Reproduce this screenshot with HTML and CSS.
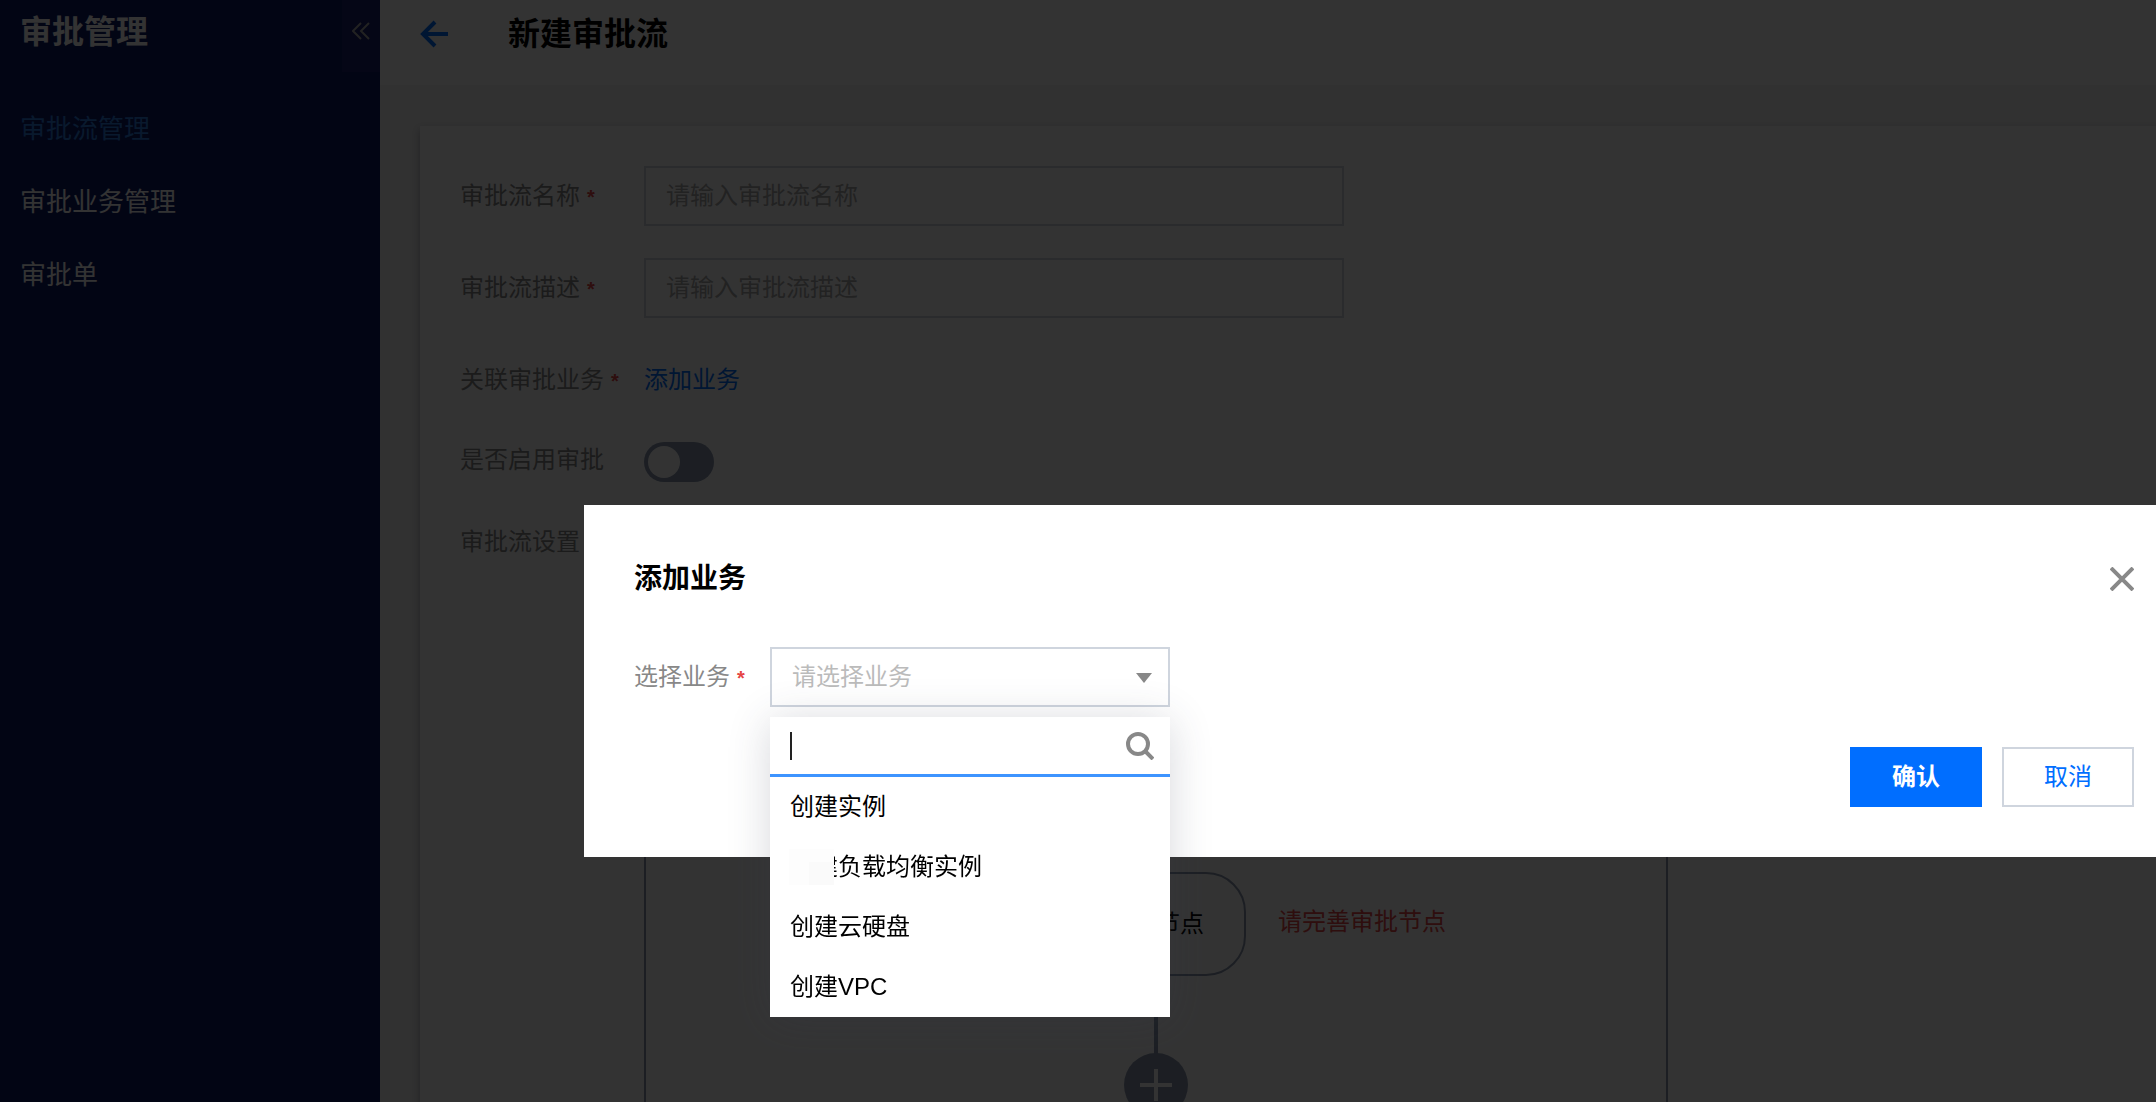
FILE: index.html
```html
<!DOCTYPE html>
<html lang="zh-CN">
<head>
    <meta charset="UTF-8">
    <meta name="viewport" content="width=device-width, initial-scale=1.0">
    <title>新建审批流</title>
    <link rel="stylesheet" href="styles.css">
</head>
<body>
    <div class="layout">
        <aside class="sidebar">
            <div class="sidebar-head">
                <h2>审批管理</h2>
                <button class="collapse" type="button" aria-label="收起">
                    <svg width="18" height="18" viewBox="0 0 18 18" fill="none" stroke="currentColor" stroke-width="2"><path d="M9 1L1 9l8 8M17 1L9 9l8 8"/></svg>
                </button>
            </div>
            <nav>
                <a class="active" href="#">审批流管理</a>
                <a href="#">审批业务管理</a>
                <a href="#">审批单</a>
            </nav>
        </aside>

        <main class="main">
            <header class="page-header">
                <a class="back" href="#" aria-label="返回">
                    <svg width="28" height="28" viewBox="0 0 28 28" fill="none" stroke="currentColor" stroke-width="4"><path d="M15 2L3 14l12 12M3 14h25"/></svg>
                </a>
                <h1>新建审批流</h1>
            </header>

            <form class="card">
                <div class="row">
                    <label for="flow-name">审批流名称<i>*</i></label>
                    <input class="text" id="flow-name" type="text" placeholder="请输入审批流名称">
                </div>
                <div class="row">
                    <label for="flow-desc">审批流描述<i>*</i></label>
                    <input class="text" id="flow-desc" type="text" placeholder="请输入审批流描述">
                </div>
                <div class="row">
                    <span class="label">关联审批业务<i>*</i></span>
                    <a class="link" href="#">添加业务</a>
                </div>
                <div class="row row-switch">
                    <label for="enabled">是否启用审批</label>
                    <input class="switch" id="enabled" type="checkbox">
                </div>
                <div class="row row-flow">
                    <span class="label">审批流设置<i>*</i></span>
                    <div class="flow">
                        <div class="node-line">
                            <button class="node" type="button">审批节点</button>
                            <span class="error">请完善审批节点</span>
                        </div>
                        <button class="add" type="button" aria-label="添加节点">
                            <svg width="32" height="32" viewBox="0 0 32 32" stroke="currentColor" stroke-width="4"><path d="M16 0v32M0 16h32"/></svg>
                        </button>
                    </div>
                </div>
            </form>
        </main>
    </div>

    <div class="mask">
        <section class="modal" role="dialog" aria-labelledby="modal-title">
            <div class="modal-head">
                <h3 id="modal-title">添加业务</h3>
                <button class="close" type="button" aria-label="关闭">
                    <svg width="24" height="24" viewBox="0 0 24 24" stroke="currentColor" stroke-width="4"><path d="M1 1l22 22M23 1L1 23"/></svg>
                </button>
            </div>
            <div class="modal-body">
                <label for="business">选择业务<i>*</i></label>
                <div class="picker">
                    <select id="business">
                        <option>请选择业务</option>
                    </select>
                    <svg class="caret" width="16" height="10" viewBox="0 0 16 10"><path d="M0 0h16l-8 10z" fill="#888"/></svg>
                    <div class="dropdown">
                        <div class="search">
                            <input type="text" aria-label="搜索">
                            <span class="cursor"></span>
                            <svg width="28" height="28" viewBox="0 0 28 28" fill="none" stroke="#888" stroke-width="4"><circle cx="12" cy="12" r="10"/><path d="M19 19l8 8"/></svg>
                        </div>
                        <ul>
                            <li>创建实例</li>
                            <li class="masked">创建负载均衡实例</li>
                            <li>创建云硬盘</li>
                            <li>创建VPC</li>
                        </ul>
                    </div>
                </div>
            </div>
            <div class="modal-foot">
                <button class="btn primary" type="button">确认</button>
                <button class="btn" type="button">取消</button>
            </div>
        </section>
    </div>
</body>
</html>
```
FILE: styles.css
```css
* {
    box-sizing: border-box;
}
body {
    margin: 0;
    height: 100vh;
    overflow: hidden;
    font-family: "Liberation Sans", "Noto Sans CJK SC", sans-serif;
    font-size: 24px;
    line-height: 36px;
    color: #000;
}
h1, h2, h3, ul {
    margin: 0;
    padding: 0;
}
a {
    text-decoration: none;
}
button, input, select {
    font: inherit;
    border: 0;
    padding: 0;
    background: none;
}
i {
    margin-left: 7px;
    font-size: 20px;
    font-style: normal;
    font-weight: bold;
    color: #e54545;
}
.layout {
    display: flex;
    height: 100vh;
    overflow: hidden;
}

/* sidebar */
.sidebar {
    flex: 0 0 380px;
    background: #0a1966;
    color: #fff;
}
.sidebar-head {
    display: flex;
    justify-content: space-between;
    height: 72px;
    padding-left: 20px;
}
.sidebar-head h2 {
    font-size: 32px;
    line-height: 64px;
}
.collapse {
    width: 38px;
    height: 72px;
    padding-bottom: 8px;
    background: #191e70;
    color: #aaa;
}
.sidebar nav {
    display: flex;
    flex-direction: column;
    padding: 21px 20px 0;
}
.sidebar nav a {
    font-size: 26px;
    line-height: 73px;
    color: #fff;
}
.sidebar nav .active {
    color: #2d7fe0;
}

/* page */
.main {
    flex: 1;
    min-width: 0;
    background: #f3f3f3;
}
.page-header {
    display: flex;
    align-items: center;
    gap: 60px;
    height: 85px;
    padding: 0 40px 18px;
    background: #fff;
}
.page-header h1 {
    font-size: 32px;
}
.back {
    display: flex;
    color: #006eff;
}
.card {
    display: grid;
    gap: 32px;
    margin: 41px 0 0 40px;
    padding: 40px;
    background: #fff;
    box-shadow: 0 4px 8px rgba(54, 58, 80, 0.4);
}
.row {
    display: flex;
    align-items: center;
    height: 60px;
    color: #888;
}
.row label, .label {
    flex: 0 0 184px;
}
.text {
    width: 700px;
    height: 60px;
    padding: 0 20px;
    border: 2px solid #cfd5de;
}
.text::placeholder {
    color: #aaa;
    opacity: 1;
}
.link {
    color: #006eff;
}
.row-switch {
    align-items: flex-start;
    height: 40px;
}
.switch {
    appearance: none;
    width: 70px;
    height: 40px;
    margin: 0;
    padding: 4px;
    border-radius: 20px;
    background: #8a98b0;
}
.switch::before {
    content: "";
    display: block;
    width: 32px;
    height: 32px;
    border-radius: 50%;
    background: #fff;
}
.row-flow {
    align-items: flex-start;
    height: auto;
    padding-top: 10px;
}
.flow {
    display: flex;
    flex-direction: column;
    align-items: center;
    width: 1024px;
    height: 700px;
    padding-top: 346px;
    border: 2px solid #8a98b0;
    background: linear-gradient(#8a98b0, #8a98b0) center top / 4px 100% no-repeat;
}
.node-line {
    position: relative;
    margin-bottom: 77px;
}
.node {
    display: block;
    width: 180px;
    height: 104px;
    border: 2px solid #8a98b0;
    border-radius: 40px;
    background: #fff;
    color: #000;
}
.error {
    position: absolute;
    left: 212px;
    top: 32px;
    white-space: nowrap;
    color: #e54545;
}
.add {
    display: flex;
    align-items: center;
    justify-content: center;
    width: 64px;
    height: 64px;
    border-radius: 50%;
    background: #8a98b0;
    color: #fff;
}

/* modal */
.mask {
    position: fixed;
    inset: 0;
    padding: 505px 0 0 584px;
    background: rgba(0, 0, 0, 0.8);
}
.modal {
    display: flex;
    flex-direction: column;
    padding: 54px 22px 50px 50px;
    background: #fff;
}
.modal-head {
    display: flex;
    align-items: center;
    justify-content: space-between;
    height: 40px;
}
.modal-head h3 {
    font-size: 28px;
}
.close {
    display: flex;
    color: #888;
}
.modal-body {
    display: flex;
    align-items: center;
    height: 60px;
    margin: 48px 0 40px;
}
.modal-body label {
    width: 136px;
    color: #888;
}
.picker {
    position: relative;
    width: 400px;
}
.picker select {
    display: block;
    appearance: none;
    width: 100%;
    height: 60px;
    padding: 0 20px;
    border: 2px solid #cfd5de;
    color: #bbb;
}
.caret {
    position: absolute;
    right: 18px;
    top: 26px;
}
.dropdown {
    position: absolute;
    top: 70px;
    left: 0;
    width: 100%;
    background: #fff;
    box-shadow: 0 4px 40px rgba(54, 58, 80, 0.2);
}
.search {
    display: flex;
    align-items: center;
    height: 60px;
    padding: 0 16px 0 20px;
    border-bottom: 3px solid #3d94ff;
}
.search input {
    order: 1;
    flex: 1;
    min-width: 0;
    outline: 0;
}
.search svg {
    order: 2;
}
.cursor {
    width: 2px;
    height: 28px;
    background: #222;
}
.dropdown ul {
    list-style: none;
}
.dropdown li {
    position: relative;
    padding: 0 20px;
    line-height: 60px;
}
.masked::before {
    content: "";
    position: absolute;
    left: 19px;
    top: 12px;
    width: 45px;
    height: 36px;
    background: linear-gradient(#fafafa, #fafafa) right bottom / 25px 23px no-repeat #fdfdfd;
}
.modal-foot {
    display: flex;
    justify-content: flex-end;
    gap: 20px;
}
.btn {
    width: 132px;
    height: 60px;
    border: 2px solid #cfd5de;
    color: #006eff;
}
.primary {
    border-color: #006eff;
    background: #006eff;
    color: #fff;
    font-weight: bold;
}
```
